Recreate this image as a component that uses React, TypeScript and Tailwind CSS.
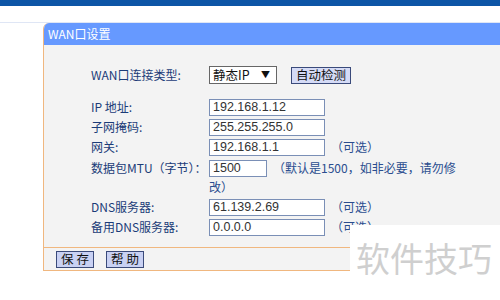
import React from "react";

const labelCls =
  "w-[118px] shrink-0 whitespace-nowrap text-[12px] leading-[16px] text-[#1b3c78]";
const inputCls =
  "h-[17px] border border-[#7a8fb6] bg-white px-[3px] text-[12.5px] leading-[15px] text-[#333] whitespace-nowrap";
const noteCls = "whitespace-nowrap text-[12px] leading-[16px] text-[#2a4d8f]";

function Row({
  label,
  value,
  note,
  w = 116,
  h = 20,
}: {
  label: string;
  value: string;
  note?: string;
  w?: number;
  h?: number;
}) {
  return (
    <div className="flex items-center" style={{ height: h }}>
      <div className={labelCls}>{label}</div>
      <div className={inputCls} style={{ width: w, fontFamily: "'Liberation Sans', Arial, sans-serif" }}>
        {value}
      </div>
      {note && <div className={`${noteCls} ml-[6px]`}>{note}</div>}
    </div>
  );
}

export default function App() {
  return (
    <div
      className="relative w-[500px] h-[300px] overflow-hidden bg-white"
      style={{ fontFamily: "'Noto Sans CJK SC', 'Liberation Sans', sans-serif" }}
    >
      <div className="h-[6px] bg-[#0d55a6]" />
      <div className="h-[17px] bg-white border-b border-[#dfe6f5]" />
      <div className="ml-[43px] w-[480px] border-l border-[#f0b77f] rounded-tl-[6px] overflow-hidden">
        <div className="h-[22px] bg-[#6699ff] flex items-center pl-[4px] text-white text-[12px]">
          WAN口设置
        </div>
        <div className="bg-[#f3f3f3] pl-[47px] pt-[21px] pb-[10px] border-b border-[#f0b77f]">
          <div className="flex items-center h-[18px]">
            <div className={labelCls}>WAN口连接类型:</div>
            <div className="w-[68px] h-[18px] border border-[#666] bg-white flex items-center justify-between pl-[3px] pr-[6px] text-[12.5px] text-[#111]">
              <span>静态IP</span>
              <span className="text-[9px]">▼</span>
            </div>
            <div className="ml-[14px] h-[17px] px-[4px] border border-[#3a4a7a] bg-[#d5dbf6] flex items-center text-[12.5px] text-[#111] whitespace-nowrap">
              自动检测
            </div>
          </div>
          <div className="h-[13px]" />
          <Row label="IP 地址:" value="192.168.1.12" />
          <Row label="子网掩码:" value="255.255.255.0" />
          <Row label="网关:" value="192.168.1.1" note="（可选）" />
          <div className="flex items-center h-[22px]">
            <div className={`${labelCls} text-[11.5px]`}>数据包MTU（字节）：</div>
            <div className={inputCls} style={{ width: 58, fontFamily: "'Liberation Sans', Arial, sans-serif" }}>
              1500
            </div>
            <div className={`${noteCls} ml-[6px]`}>（默认是1500，如非必要，请勿修</div>
          </div>
          <div className="h-[18px] pl-[118px] text-[12px] leading-[16px] text-[#2a4d8f]">改）</div>
          <Row label="DNS服务器:" value="61.139.2.69" note="（可选）" />
          <Row label="备用DNS服务器:" value="0.0.0.0" note="（可选）" />
        </div>
        <div className="bg-[#f3f3f3] h-[23px] flex items-center pl-[12px] gap-[12px] border-b border-[#f0b77f]">
          <div className="h-[17px] w-[38px] border border-[#3a4a7a] bg-[#c9d1f3] flex items-center justify-center text-[12.5px] text-[#111] whitespace-nowrap">
            保 存
          </div>
          <div className="h-[17px] w-[38px] border border-[#3a4a7a] bg-[#c9d1f3] flex items-center justify-center text-[12.5px] text-[#111] whitespace-nowrap">
            帮 助
          </div>
        </div>
      </div>
      <div className="absolute left-[350px] top-[225px] w-[150px] h-[56px] bg-white flex items-end pl-[6px] pb-[2px]">
        <span className="text-[34px] leading-[42px] text-[#cfcfcf] whitespace-nowrap">软件技巧</span>
      </div>
    </div>
  );
}
